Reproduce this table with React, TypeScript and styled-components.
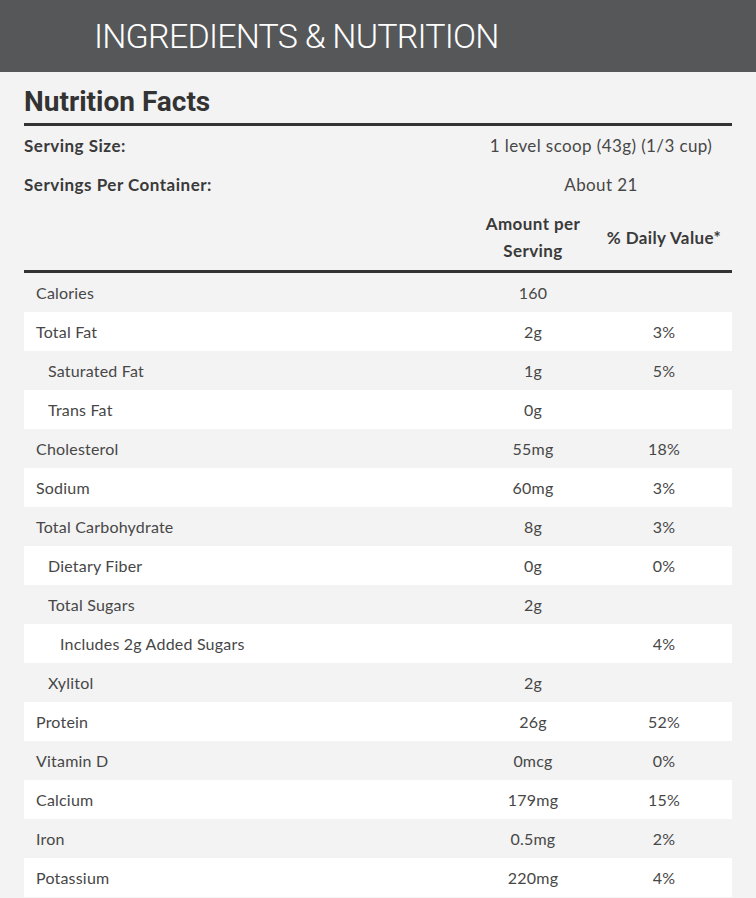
import styled, { createGlobalStyle } from "styled-components";

const GlobalStyle = createGlobalStyle`
  html, body {
    margin: 0;
    padding: 0;
    background: #f3f3f3;
  }
  body {
    font-family: Lato, "Noto Sans", sans-serif;
    color: #474747;
  }
`;

const Header = styled.div`
  background-color: #555759;
  height: 72px;
  display: flex;
  align-items: center;
  padding-left: 94px;
`;

const Title = styled.h1`
  margin: 0;
  font-family: Roboto, "Liberation Sans", sans-serif;
  font-weight: 300;
  font-size: 34px;
  color: #ffffff;
  letter-spacing: -0.8px;
`;

const Content = styled.div`
  padding: 0 24px;
`;

const FactsTitle = styled.h2`
  margin: 0;
  font-family: Roboto, "Liberation Sans", sans-serif;
  font-weight: 700;
  font-size: 28px;
  color: #333;
  line-height: 32px;
  padding-top: 14px;
  padding-bottom: 5px;
  border-bottom: 3px solid #333;
`;

const Grid = styled.div`
  display: grid;
  grid-template-columns: 1fr 126px 136px;
`;

const InfoRow = styled(Grid)`
  height: 39px;
  align-items: center;
  font-size: 17px;
`;

const InfoLabel = styled.div`
  font-weight: 700;
  color: #3a3a3a;
  letter-spacing: 0.5px;
`;

const InfoValue = styled.div`
  grid-column: 2 / 4;
  text-align: center;
  letter-spacing: 0.4px;
`;

const HeadRow = styled(Grid)`
  align-items: center;
  padding: 6px 0 6px;
  border-bottom: 3px solid #333;
  font-size: 17px;
  font-weight: 700;
  color: #3a3a3a;
  line-height: 27px;
  letter-spacing: 0.4px;
`;

const HeadCell = styled.div`
  text-align: center;
`;

const DataRow = styled(Grid)<{ $white: boolean }>`
  height: 39px;
  align-items: center;
  font-size: 16px;
  letter-spacing: 0.2px;
  background-color: ${(p) => (p.$white ? "#ffffff" : "#f3f3f3")};
`;

const Label = styled.div<{ $level: number }>`
  padding-left: ${(p) => 12 + p.$level * 12}px;
`;

const Cell = styled.div`
  text-align: center;
`;

const rows: [string, number, string, string][] = [
  ["Calories", 0, "160", ""],
  ["Total Fat", 0, "2g", "3%"],
  ["Saturated Fat", 1, "1g", "5%"],
  ["Trans Fat", 1, "0g", ""],
  ["Cholesterol", 0, "55mg", "18%"],
  ["Sodium", 0, "60mg", "3%"],
  ["Total Carbohydrate", 0, "8g", "3%"],
  ["Dietary Fiber", 1, "0g", "0%"],
  ["Total Sugars", 1, "2g", ""],
  ["Includes 2g Added Sugars", 2, "", "4%"],
  ["Xylitol", 1, "2g", ""],
  ["Protein", 0, "26g", "52%"],
  ["Vitamin D", 0, "0mcg", "0%"],
  ["Calcium", 0, "179mg", "15%"],
  ["Iron", 0, "0.5mg", "2%"],
  ["Potassium", 0, "220mg", "4%"],
];

export default function App() {
  return (
    <>
      <GlobalStyle />
      <Header>
        <Title>INGREDIENTS &amp; NUTRITION</Title>
      </Header>
      <Content>
        <FactsTitle>Nutrition Facts</FactsTitle>
        <InfoRow>
          <InfoLabel>Serving Size:</InfoLabel>
          <InfoValue>1 level scoop (43g) (1/3 cup)</InfoValue>
        </InfoRow>
        <InfoRow>
          <InfoLabel>Servings Per Container:</InfoLabel>
          <InfoValue>About 21</InfoValue>
        </InfoRow>
        <HeadRow>
          <div />
          <HeadCell>
            Amount per
            <br />
            Serving
          </HeadCell>
          <HeadCell>% Daily Value*</HeadCell>
        </HeadRow>
        {rows.map(([name, level, amount, dv], i) => (
          <DataRow key={name} $white={i % 2 === 1}>
            <Label $level={level}>{name}</Label>
            <Cell>{amount}</Cell>
            <Cell>{dv}</Cell>
          </DataRow>
        ))}
      </Content>
    </>
  );
}
